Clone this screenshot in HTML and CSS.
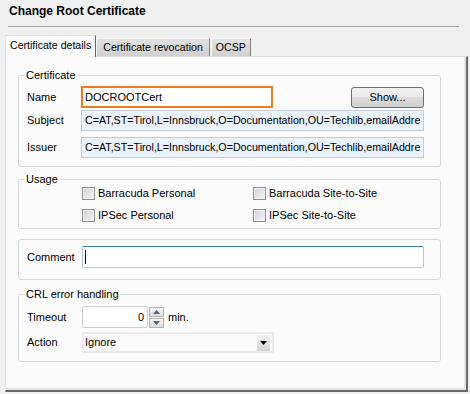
FILE: index.html
```html
<!DOCTYPE html>
<html>
<head>
<meta charset="utf-8">
<link rel="stylesheet" href="styles.css">
</head>
<body>
<div class="title">Change Root Certificate</div>
<div class="rule"></div>
<div class="tabs">
  <div class="tab active">Certificate details</div>
  <div class="tab">Certificate revocation</div>
  <div class="tab ocsp">OCSP</div>
</div>
<div class="panel">
  <fieldset class="group cert">
    <legend>Certificate</legend>
    <div class="row first">
      <span class="lbl">Name</span>
      <div class="name">DOCROOTCert</div>
      <button class="btn">Show...</button>
    </div>
    <div class="row sub">
      <span class="lbl">Subject</span>
      <div class="ro">C=AT,ST=Tirol,L=Innsbruck,O=Documentation,OU=Techlib,emailAddre</div>
    </div>
    <div class="row iss">
      <span class="lbl">Issuer</span>
      <div class="ro">C=AT,ST=Tirol,L=Innsbruck,O=Documentation,OU=Techlib,emailAddre</div>
    </div>
  </fieldset>

  <fieldset class="group usage">
    <legend>Usage</legend>
    <div class="checks">
      <label class="chk"><span class="cb"></span>Barracuda Personal</label>
      <label class="chk"><span class="cb"></span>Barracuda Site-to-Site</label>
      <label class="chk"><span class="cb"></span>IPSec Personal</label>
      <label class="chk"><span class="cb"></span>IPSec Site-to-Site</label>
    </div>
  </fieldset>

  <fieldset class="group comment">
    <div class="row">
      <span class="lbl wide">Comment</span>
      <div class="edit"><span class="caret"></span></div>
    </div>
  </fieldset>

  <fieldset class="group crl">
    <legend>CRL error handling</legend>
    <div class="row timeout">
      <span class="lbl wide">Timeout</span>
      <div class="num">0</div>
      <div class="spin">
        <span><svg width="7" height="4" viewBox="0 0 7 4"><path d="M0 4 L3.5 0 L7 4 Z" fill="#4f6590"/></svg></span>
        <span><svg width="7" height="4" viewBox="0 0 7 4"><path d="M0 0 L3.5 4 L7 0 Z" fill="#4f6590"/></svg></span>
      </div>
      <span class="unit">min.</span>
    </div>
    <div class="row action">
      <span class="lbl wide">Action</span>
      <div class="select">
        <span>Ignore</span>
        <span class="arrow"><svg width="7" height="4" viewBox="0 0 7 4"><path d="M0 0 L3.5 4 L7 0 Z" fill="#000"/></svg></span>
      </div>
    </div>
  </fieldset>
</div>
</body>
</html>
```

FILE: styles.css
```css
html, body {
  margin: 0;
  padding: 0;
}
body {
  background: #f0f0f0;
  font-family: "Liberation Sans", Arial, sans-serif;
  font-size: 11px;
  line-height: 13px;
  color: #000;
  width: 470px;
  height: 394px;
  overflow: hidden;
}
.title {
  margin: 4px 0 0 9px;
  font-weight: bold;
  font-size: 12px;
  line-height: 14px;
}
.rule {
  margin: 8px 0 0 8px;
  width: 451px;
  border-top: 1px solid #a0a0a0;
}
.tabs {
  display: flex;
  align-items: flex-end;
  height: 21px;
  margin-top: 8px;
  padding-left: 5px;
}
.tab {
  box-sizing: border-box;
  height: 18px;
  line-height: 16px;
  padding: 0 6px;
  font-size: 10.6px;
  background: linear-gradient(#e2e2e2, #d0d0d0);
  border-style: solid;
  border-width: 1px 1px 0 1px;
  border-color: #f6f6f6 #7e7e7e transparent #f6f6f6;
  white-space: nowrap;
}
.tab.ocsp {
  margin-left: 1px;
  padding: 0 4px;
}
.tab.active {
  height: 22px;
  line-height: 19px;
  margin-bottom: -1px;
  padding: 0 4px;
  background: #fcfcfc;
  border-color: #e0e0e0 #696969 transparent #e6e6e6;
  position: relative;
  z-index: 1;
}
.panel {
  box-sizing: border-box;
  margin-left: 5px;
  width: 463px;
  height: 336px;
  background: #fcfcfc;
  border-style: solid;
  border-width: 1px 2px 2px 1px;
  border-color: #dcdcdc #696969 #696969 #e6e6e6;
  box-shadow: inset -2px -2px 0 #e3e3e3;
  padding: 0 25px 0 12px;
}
.group {
  margin: 0;
  padding: 0 16px 8px 8px;
  border: 1px solid #d5d9de;
  border-radius: 3px;
  min-width: 0;
}
.group legend {
  padding: 0 2px;
  margin-left: -3px;
  line-height: 12px;
}
.cert { margin-top: 12px; }
.usage { margin-top: 6px; padding-bottom: 5px; }
.comment { margin-top: 10px; padding-top: 6px; padding-bottom: 11px; }
.crl { margin-top: 8px; }

.row {
  display: flex;
  align-items: center;
}
.lbl {
  flex: none;
  width: 54px;
}
.lbl.wide { width: 55px; }
.row.first { margin-top: 5px; height: 22px; }
.row.sub { margin-top: 2px; }
.row.iss { margin-top: 6px; }

.name {
  box-sizing: border-box;
  width: 192px;
  height: 22px;
  border: 2px solid #f07a1f;
  background: #fff;
  padding-left: 2px;
  line-height: 18px;
}
.btn {
  margin-left: auto;
  box-sizing: border-box;
  width: 73px;
  height: 21px;
  padding: 0;
  border: 1px solid #707070;
  border-radius: 3px;
  background: linear-gradient(#f2f2f2 0%, #ebebeb 50%, #dddddd 50%, #cfcfcf 100%);
  font: inherit;
  color: #000;
}
.ro {
  flex: 1;
  min-width: 0;
  box-sizing: border-box;
  height: 21px;
  border: 1px solid #c5cbd2;
  background: #eaf2fc;
  padding-left: 3px;
  font-size: 10.7px;
  line-height: 19px;
  white-space: nowrap;
  overflow: hidden;
}

.checks {
  display: grid;
  grid-template-columns: 171px auto;
  grid-auto-rows: 16px;
  row-gap: 6px;
  padding-left: 55px;
}
.chk {
  display: flex;
  align-items: center;
  white-space: nowrap;
}
.cb {
  flex: none;
  box-sizing: border-box;
  width: 13px;
  height: 13px;
  margin-right: 3px;
  border: 1px solid #8e8f8f;
  background: linear-gradient(135deg, #cdd0d4, #f6f6f6);
  box-shadow: inset 0 0 0 1px #f2f2f2;
}

.edit {
  flex: 1;
  box-sizing: border-box;
  height: 22px;
  border: 1px solid;
  border-color: #3d7bad #a4c9e3 #b5cfe7 #a4c9e3;
  border-radius: 2px;
  background: #fff;
  display: flex;
  align-items: center;
  padding-left: 2px;
}
.caret {
  width: 1px;
  height: 14px;
  background: #000;
}

.row.timeout { margin-top: 6px; height: 22px; }
.row.action { margin-top: 4px; }
.num {
  box-sizing: border-box;
  width: 66px;
  height: 22px;
  border: 1px solid #d0d0d0;
  border-radius: 2px;
  background: #fff;
  text-align: right;
  padding-right: 3px;
  line-height: 20px;
}
.spin {
  display: flex;
  flex-direction: column;
  gap: 1px;
  margin-left: 1px;
}
.spin span {
  box-sizing: border-box;
  width: 15px;
  height: 10px;
  border: 1px solid #b4b4b4;
  background: linear-gradient(#f6f6f6, #dcdcdc);
  display: flex;
  align-items: center;
  justify-content: center;
}
.unit { margin-left: 4px; }
.select {
  box-sizing: border-box;
  width: 192px;
  height: 21px;
  border: 2px solid #ebebeb;
  background: #fcfcfc;
  display: flex;
  align-items: center;
  padding-left: 1px;
}
.arrow {
  margin-left: auto;
  margin-right: 2px;
  width: 13px;
  height: 16px;
  background: linear-gradient(#f4f4f4, #d3d3d3);
  display: flex;
  align-items: center;
  justify-content: center;
}
```
